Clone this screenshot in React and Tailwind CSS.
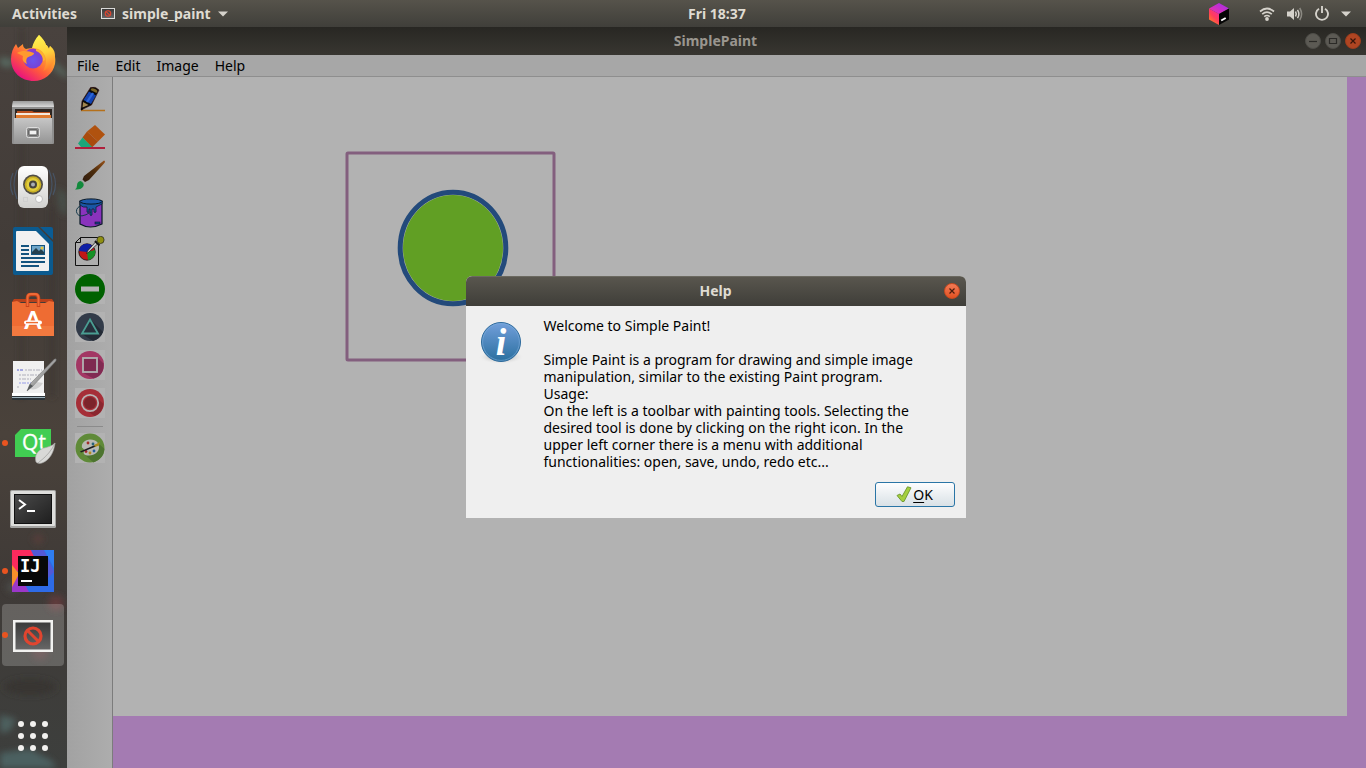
import React from "react";

/* ---------- dock icons (48 x 48) ---------- */

function FirefoxIcon() {
  return (
    <svg viewBox="0 0 48 48" className="size-12" aria-hidden="true">
      <defs>
        <linearGradient id="ff-body" x1="0.85" y1="0.1" x2="0.25" y2="0.95">
          <stop offset="0" stopColor="#ffe14a" />
          <stop offset="0.35" stopColor="#ffa02e" />
          <stop offset="0.65" stopColor="#ff5a3c" />
          <stop offset="1" stopColor="#e9127f" />
        </linearGradient>
        <radialGradient id="ff-globe" cx="0.5" cy="0.6" r="0.6">
          <stop offset="0" stopColor="#6a55ee" />
          <stop offset="0.6" stopColor="#7545d8" />
          <stop offset="1" stopColor="#9a35c9" />
        </radialGradient>
        <linearGradient id="ff-tail" x1="0.4" y1="0" x2="0.6" y2="1">
          <stop offset="0" stopColor="#fff44f" />
          <stop offset="0.5" stopColor="#ffd23c" />
          <stop offset="1" stopColor="#ff7a2b" />
        </linearGradient>
      </defs>
      <path d="M30 0c3 3 6 6 7 10 1-0 2 2 3 4l1-3c5 6 6 13 5 18-2 10-11 17-21 17C12 46 2 37 2 24c0-6 2-11 5-15l2 4 5-4c0 3 1 4 3 5 3-1 6-1 8-1-0-5 2-9 5-13z" fill="url(#ff-body)" />
      <path d="M30 0c-3 3-6 8-7 13 7 0 11 3 13 8 2 5 1 10-2 15 8-3 12-8 12-15 0-4-1-7-5-10l-1 3c-1-2-2-4-3-4-1-4-4-7-7-10z" fill="url(#ff-tail)" />
      <circle cx="24" cy="23.500" r="10" fill="url(#ff-globe)" />
      <path d="M8 18c5-3 12-2 17 0 0 3-5 3-7 5-1 2-1 4 0 6-4-2-5-4-4-8-2-1-4-2-6-3z" fill="#ff9a2e" />
      <path d="M27 14c5 0 9 5 9 11l-2 1c0-4-2-8-7-10z" fill="#ffb02e" />
    </svg>
  );
}

function FilesIcon() {
  return (
    <svg viewBox="0 0 48 48" className="size-12" aria-hidden="true">
      <defs>
        <linearGradient id="files-front" x1="0" y1="0" x2="0" y2="1">
          <stop offset="0" stopColor="#c6c6c6" />
          <stop offset="1" stopColor="#949494" />
        </linearGradient>
        <linearGradient id="files-top" x1="0" y1="0" x2="0" y2="1">
          <stop offset="0" stopColor="#9c9c9c" />
          <stop offset="1" stopColor="#dadada" />
        </linearGradient>
      </defs>
      <path d="M4 2h40l1 5v37a1 1 0 0 1-1 1H4a1 1 0 0 1-1-1V7z" fill="#8f8f8f" />
      <path d="M4 2h40l1 6H3z" fill="url(#files-top)" />
      <rect x="6" y="10" width="37" height="9" fill="#2d2622" />
      <path d="M8 12h15l2 1h16v2H8z" fill="#b8501f" />
      <rect x="7" y="14" width="34" height="2" fill="#f4e9dd" />
      <rect x="7" y="16" width="35" height="3" fill="#e07a2f" />
      <path d="M5 19h38v25a1 1 0 0 1-1 1H6a1 1 0 0 1-1-1z" fill="url(#files-front)" />
      <rect x="17.500" y="28.500" width="13" height="10" rx="2" fill="#8a8a8a" stroke="#dedede" />
      <rect x="20" y="31" width="8" height="5" rx="0.500" fill="#f2f2f2" stroke="#444" />
    </svg>
  );
}

function MusicIcon() {
  return (
    <svg viewBox="0 0 48 48" className="size-12" aria-hidden="true">
      <defs>
        <linearGradient id="music-body" x1="0" y1="0" x2="0" y2="1">
          <stop offset="0" stopColor="#ffffff" />
          <stop offset="1" stopColor="#d0d0ce" />
        </linearGradient>
      </defs>
      <g fill="none" stroke="#4b6f99" strokeWidth="1.200">
        <path d="M8 7q-6 14 0 29M4 10q-5 11 0 22" opacity="0.450" />
        <path d="M40 7q6 14 0 29M44 10q5 11 0 22" opacity="0.450" />
      </g>
      <rect x="9" y="3" width="30" height="42" rx="6" fill="url(#music-body)" />
      <circle cx="24" cy="21.500" r="10" fill="#504d46" />
      <circle cx="24" cy="21.500" r="8.300" fill="#c9b024" />
      <circle cx="24" cy="21.500" r="6.500" fill="#e1cd3f" />
      <circle cx="24" cy="21.500" r="4" fill="#45423d" />
      <circle cx="24" cy="21.500" r="2" fill="#a9adb5" />
      <circle cx="30" cy="36" r="3.500" fill="#fafafa" stroke="#bdbdbd" />
      <rect x="14.500" y="34.500" width="4" height="4" fill="none" stroke="#cfcfcf" />
    </svg>
  );
}

function WriterIcon() {
  return (
    <svg viewBox="0 0 48 48" className="size-12" aria-hidden="true">
      <path d="M6 0h23l15 15v31a2 2 0 0 1-2 2H6a2 2 0 0 1-2-2V2a2 2 0 0 1 2-2z" fill="#0b5a8e" />
      <path d="M31 0h11a2 2 0 0 1 2 2v11z" fill="#0a5c94" />
      <path d="M8 4h19l13 13v26a1 1 0 0 1-1 1H8a1 1 0 0 1-1-1V5a1 1 0 0 1 1-1z" fill="#f1f1f1" />
      <g fill="#14547f">
        <rect x="12" y="18" width="8" height="2" />
        <rect x="12" y="22" width="8" height="2" />
        <rect x="12" y="26" width="8" height="2" />
        <rect x="12" y="30" width="24" height="2" />
        <rect x="12" y="34" width="24" height="2" />
        <rect x="12" y="38" width="18" height="2" />
        <rect x="22" y="18" width="14" height="10" />
      </g>
      <rect x="23" y="19" width="12" height="8" fill="#6fa6c9" />
      <path d="M23 27v-2l4-4 3 3 2-2 3 3v2z" fill="#24404f" />
      <circle cx="33" cy="21" r="1.500" fill="#e8c63a" />
    </svg>
  );
}

function SoftwareIcon() {
  return (
    <svg viewBox="0 0 48 48" className="size-12" aria-hidden="true">
      <path d="M5 8h38l2 3H3z" fill="#b8401a" />
      <path d="M3 11l5-1 4 2h24l4-2 5 1v34H3z" fill="#ee6c33" />
      <path d="M3 35h42v10H3z" fill="#f2793f" />
      <path d="M18.500 16V7q0-3.500 3.500-3.500h4q3.500 0 3.500 3.500v9" fill="none" stroke="#c9451b" strokeWidth="3.500" />
      <path d="M18.500 15V7q0-4 3.500-4h4q3.500 0 3.500 4v8" fill="none" stroke="#ee6a37" strokeWidth="1.800" />
      <text x="24" y="38" textAnchor="middle" fontSize="25" fontWeight="700" fontFamily="Lato, sans-serif" fill="#fff">A</text>
      <rect x="15" y="29.500" width="18" height="4" rx="2" fill="#fff" />
      <rect x="17" y="30.900" width="12" height="1.400" fill="#ee6c33" />
    </svg>
  );
}

function EditorIcon() {
  return (
    <svg viewBox="0 0 48 48" className="size-12" aria-hidden="true">
      <defs>
        <linearGradient id="pen" x1="0" y1="0" x2="1" y2="1">
          <stop offset="0" stopColor="#e8e8e8" />
          <stop offset="1" stopColor="#5b5b5b" />
        </linearGradient>
      </defs>
      <rect x="3" y="39" width="33" height="6" rx="1" fill="#2b3338" />
      <path d="M4 6h31v31l1 3H3l1-3z" fill="#f0f0f0" />
      <rect x="3" y="38" width="33" height="3" fill="#fff" />
      <rect x="3" y="42" width="33" height="1" fill="#9fb3bd" />
      <g stroke="#c4c4cc" strokeWidth="1.600" strokeDasharray="2 1 4 1">
        <path d="M8 15h6" stroke="#8a90dc" />
        <path d="M16 15h17M10 20h20M10 24h12" />
        <path d="M10 28h12" stroke="#b4b8ea" />
        <path d="M8 32h2" />
      </g>
      <path d="M21 34q8 2 13-6l-6-1z" fill="#bdbdbd" opacity="0.600" />
      <path d="M18 36l3-7L45.500 4q2.500-1 1.500 2L24 31z" fill="url(#pen)" stroke="#6a6a6a" strokeWidth="0.500" />
      <path d="M18 36l3-7 3 2z" fill="#54585a" />
    </svg>
  );
}

function QtIcon() {
  return (
    <svg viewBox="0 0 48 48" className="size-12" aria-hidden="true">
      <path d="M12 10h30v22l-6 6H6V16z" fill="#41cd52" />
      <text x="25" y="31" textAnchor="middle" fontSize="21" fontFamily="'Open Sans', sans-serif" fill="#fff" stroke="#fff" strokeWidth="0.300">Qt</text>
      <path d="M46 24c-1 9-5 17-13 20-3 1-5 0-6-1-2-7 2-12 8-14 4-1 8-2 11-5z" fill="#d9d9d7" stroke="#a5a5a3" strokeWidth="0.600" />
      <path d="M46 24q-4 10-17 20" fill="none" stroke="#a3a3a1" strokeWidth="0.800" />
    </svg>
  );
}

function TerminalIcon() {
  return (
    <svg viewBox="0 0 48 48" className="size-12" aria-hidden="true">
      <defs>
        <linearGradient id="term" x1="0" y1="0" x2="1" y2="1">
          <stop offset="0" stopColor="#4a4a4a" />
          <stop offset="1" stopColor="#1f1f1f" />
        </linearGradient>
      </defs>
      <rect x="1" y="7" width="46" height="38" rx="1.500" fill="#a4a4a2" />
      <rect x="2" y="8" width="44" height="35" rx="1" fill="#dededc" />
      <rect x="5" y="11" width="38" height="30" fill="#111" />
      <rect x="6" y="12" width="36" height="28" fill="url(#term)" />
      <path d="M10 17l6 4.500-6 4.500M18 28h8" fill="none" stroke="#fff" strokeWidth="2" />
    </svg>
  );
}

function IdeaIcon() {
  return (
    <svg viewBox="0 0 48 48" className="size-12" aria-hidden="true">
      <rect x="3" y="3" width="42" height="42" fill="#2e6be6" />
      <path d="M3 3h19l4 8-14 16-9-7z" fill="#fb2a5d" />
      <path d="M3 18l9 11-9 13z" fill="#f7902a" />
      <path d="M3 40l7-13 10 18H3z" fill="#9b37c9" />
      <path d="M22 3h13l10 22-8 8z" fill="#5359d6" />
      <path d="M35 3h10v18z" fill="#2f7df0" />
      <rect x="9" y="9" width="30" height="30" fill="#080808" />
      <text x="11" y="25" fontSize="17" fontWeight="700" fontFamily="'DejaVu Sans Mono', monospace" fill="#fff">IJ</text>
      <rect x="12" y="33" width="11" height="2" fill="#fff" />
    </svg>
  );
}

function PaintAppIcon({ className }) {
  return (
    <svg viewBox="4 9 40 32" className={className} aria-hidden="true">
      <defs>
        <linearGradient id="pa-screen" x1="0" y1="0" x2="0" y2="1">
          <stop offset="0" stopColor="#3a3a3a" />
          <stop offset="1" stopColor="#666" />
        </linearGradient>
      </defs>
      <rect x="4" y="9" width="40" height="32" fill="#f2f2f0" />
      <rect x="6.500" y="11.500" width="35" height="27" fill="url(#pa-screen)" />
      <circle cx="24" cy="25" r="8" fill="none" stroke="#e0452f" strokeWidth="3.200" />
      <path d="M18.500 19.500l11 11" stroke="#e0452f" strokeWidth="3" />
    </svg>
  );
}

const dock = [
  { name: "Firefox", icon: <FirefoxIcon /> },
  { name: "Files", icon: <FilesIcon /> },
  { name: "Rhythmbox", icon: <MusicIcon /> },
  { name: "LibreOffice Writer", icon: <WriterIcon /> },
  { name: "Ubuntu Software", icon: <SoftwareIcon /> },
  { name: "Text Editor", icon: <EditorIcon /> },
  { name: "Qt Creator", icon: <QtIcon />, running: true },
  { name: "Terminal", icon: <TerminalIcon /> },
  { name: "IntelliJ IDEA", icon: <IdeaIcon />, running: true },
  { name: "simple_paint", icon: <PaintAppIcon className="h-8 w-10 mt-[2px]" />, running: true, active: true },
];

function Wallpaper() {
  return (
    <svg viewBox="0 0 67 741" preserveAspectRatio="xMidYMid slice" className="absolute inset-0 size-full" aria-hidden="true">
      <defs>
        <linearGradient id="wall" x1="0" y1="0" x2="0" y2="1">
          <stop offset="0" stopColor="#49423e" />
          <stop offset="0.300" stopColor="#423c38" />
          <stop offset="0.550" stopColor="#4a423b" />
          <stop offset="0.750" stopColor="#3f3a37" />
          <stop offset="1" stopColor="#3d3f3d" />
        </linearGradient>
        <filter id="soft" x="-50%" y="-50%" width="200%" height="200%">
          <feGaussianBlur stdDeviation="3" />
        </filter>
      </defs>
      <rect width="67" height="741" fill="url(#wall)" />
      <g filter="url(#soft)">
        <path d="M0 30l14 3-4 8-10-3z" fill="#596b62" />
        <path d="M54 34l13 12v6l-14-10z" fill="#56665d" />
        <path d="M57 160l10 8v22l-8-8z" fill="#475049" />
        <rect x="20" y="0" width="3" height="370" fill="#3b3532" />
        <rect x="50" y="180" width="4" height="190" fill="#3a3431" />
        <circle cx="38" cy="512" r="5" fill="#573c3b" />
        <circle cx="56" cy="576" r="8" fill="#5e3a3b" />
        <circle cx="40" cy="625" r="8" fill="#553d3d" />
        <circle cx="12" cy="560" r="6" fill="#484a47" />
        <ellipse cx="30" cy="660" rx="26" ry="8" fill="#383531" />
        <path d="M0 688l16 4-6 12-10 2z" fill="#4e605e" />
        <path d="M0 726l30-4 22 12 4 7H0z" fill="#4c6061" />
      </g>
    </svg>
  );
}

function Dock() {
  return (
    <nav aria-label="Dock" className="relative flex w-[67px] shrink-0 flex-col overflow-hidden bg-[#443e3a]">
      <Wallpaper />
      {dock.map((app) => (
        <button
          key={app.name}
          type="button"
          aria-label={app.name}
          className={
            "relative mx-[2px] my-px flex h-[62px] w-[62px] items-center justify-center rounded-[4px] " +
            (app.active ? "bg-white/20" : "")
          }
        >
          {app.running && <span className="absolute left-0 top-[28px] size-[6px] rounded-full bg-[#e95420]" />}
          {app.icon}
        </button>
      ))}
      <button type="button" aria-label="Show Applications" className="relative mt-auto mb-2 ml-[9px] grid size-12 grid-cols-[repeat(3,6px)] place-content-center gap-[6px]">
        {Array.from({ length: 9 }, (_, i) => (
          <span key={i} className="size-[6px] rounded-full bg-[#f2f1ef]" />
        ))}
      </button>
    </nav>
  );
}

/* ---------- tool icons (30 x 30) ---------- */

const toolClass = "size-[30px]";

function PencilTool() {
  return (
    <svg viewBox="0 0 30 30" className={toolClass} aria-hidden="true">
      <path d="M6 26.500h24" stroke="#b5701a" strokeWidth="1.500" />
      <path d="M6 26l1-9L15.500 3.500q5-1.500 8.500 2.500l-7.500 15z" fill="#0a0a0a" stroke="#3a1414" strokeWidth="0.600" />
      <path d="M8.500 16l5.500-8.500 7 4-5 8.500z" fill="#1443b0" />
      <path d="M11 17.500l6-9 2 1-6 9z" fill="#2c66d6" />
      <path d="M15.500 6l1.200-1.800q4 0 5.800 2.800l-1 2z" fill="#7c6524" />
      <path d="M7.500 23.500l.6-5.500 5.400 3z" fill="#a1854f" />
      <path d="M6 26.500l.5-3 2 1.500z" fill="#000" />
    </svg>
  );
}

function EraserTool() {
  return (
    <svg viewBox="0 0 30 30" className={toolClass} aria-hidden="true">
      <path d="M20 3l10 9.500-7 7L12 9.500z" fill="#b0520f" />
      <path d="M12 9.500l11 10-6 6L7.500 15.500z" fill="#a94b0e" />
      <path d="M7.500 15.500L17 25H6l-3-3.500z" fill="#1da67a" />
      <path d="M0 26h30" stroke="#b01030" strokeWidth="1.800" />
    </svg>
  );
}

function BrushTool() {
  return (
    <svg viewBox="0 0 30 30" className={toolClass} aria-hidden="true">
      <defs>
        <linearGradient id="brush" x1="1" y1="0" x2="0" y2="1">
          <stop offset="0" stopColor="#97521a" />
          <stop offset="0.500" stopColor="#4c2c0c" />
          <stop offset="1" stopColor="#2f1c10" />
        </linearGradient>
      </defs>
      <path d="M29 .5q2 1 0 3L14 20l-4 2-2.500-2.500L9 16z" fill="url(#brush)" />
      <path d="M7 20.500l2.500 2.500-1.500 1-2.500-2.500z" fill="#9ca49d" />
      <path d="M5.500 21q4 2 3 5-2 4-8.500 3.500 2-1 2-4 0-4 3.500-4.500z" fill="#128a3c" />
    </svg>
  );
}

function BucketTool() {
  return (
    <svg viewBox="0 0 30 30" className={toolClass} aria-hidden="true">
      <path d="M5 3v23q10 6 22 0V3z" fill="#8a33bd" stroke="#081826" strokeWidth="1.200" />
      <path d="M5 3v4q3 3 7 2v5q1 1 2 0v-3h1v6q1 1 2 0v-6h2v3q1 1 2 0v-5l6-3V3z" fill="#1956a5" stroke="#081826" strokeWidth="0.700" />
      <ellipse cx="16" cy="3.500" rx="11" ry="2.600" fill="#1d5aad" stroke="#081826" />
      <path d="M5 8q-5 3-3 7.500Q5 21 16 14" fill="none" stroke="#16384a" strokeWidth="1" />
      <rect x="20" y="24" width="5" height="2" fill="#1b3d8b" stroke="#081826" strokeWidth="0.600" />
    </svg>
  );
}

function PickerTool() {
  return (
    <svg viewBox="0 0 30 30" className={toolClass} aria-hidden="true">
      <path d="M5.500 1.500H23.500v28H.5v-23z" fill="#aeaeae" stroke="#111" />
      <path d="M5.500 1.500v5h-5" fill="none" stroke="#111" />
      <circle cx="12" cy="16" r="8.200" fill="#c01717" stroke="#111" strokeWidth="0.800" />
      <path d="M12 16l-8-1a8 8 0 0 1 13.500-5z" fill="#0e1fa5" />
      <path d="M12 16l8-2a8 8 0 0 1-7 10z" fill="#149025" />
      <path d="M11.500 17.500l1-2.500 8-9 2 2-8.500 8z" fill="#c9c9c9" stroke="#111" strokeWidth="0.700" />
      <path d="M20 5l4.500 4.500" stroke="#111" strokeWidth="2" />
      <circle cx="25.500" cy="3.900" r="3.600" fill="#8f8f12" stroke="#222" strokeWidth="0.700" />
    </svg>
  );
}

function MinusTool() {
  return (
    <svg viewBox="0 0 30 30" className={toolClass} aria-hidden="true">
      <rect width="30" height="30" fill="#b2b2b2" />
      <circle cx="15" cy="15" r="15" fill="#006100" />
      <rect x="6" y="12.500" width="18" height="5" fill="#b2b2b2" />
    </svg>
  );
}

function TriangleTool() {
  return (
    <svg viewBox="0 0 30 30" className={toolClass} aria-hidden="true">
      <rect width="30" height="30" fill="#b2b2b2" />
      <circle cx="15" cy="15" r="14" fill="#323b49" />
      <path d="M15 7l13 13q-3 7-10 9l-11-7z" fill="#232a35" />
      <path d="M15 7.500l8 14H7z" fill="#27303c" stroke="#4a9d92" strokeWidth="1.800" />
    </svg>
  );
}

function SquareTool() {
  return (
    <svg viewBox="0 0 30 30" className={toolClass} aria-hidden="true">
      <rect width="30" height="30" fill="#b2b2b2" />
      <circle cx="15" cy="15" r="14" fill="#a33764" />
      <path d="M22.500 7.500l6 6q1 12-10 15l-11-6z" fill="#812a52" />
      <rect x="8" y="8" width="14" height="14" fill="#7e2a50" stroke="#b2b2b2" strokeWidth="1.800" />
    </svg>
  );
}

function CircleTool() {
  return (
    <svg viewBox="0 0 30 30" className={toolClass} aria-hidden="true">
      <rect width="30" height="30" fill="#b2b2b2" />
      <circle cx="15" cy="15" r="14" fill="#a62f38" />
      <path d="M21 9l7.500 7q-1 9-9 12l-10-7z" fill="#8a272f" />
      <circle cx="15" cy="15" r="8.200" fill="#a62f38" stroke="#b8b4b4" strokeWidth="1.800" />
      <circle cx="15" cy="15" r="6" fill="#7c242b" />
    </svg>
  );
}

function PaletteTool() {
  return (
    <svg viewBox="0 0 30 30" className={toolClass} aria-hidden="true">
      <rect width="30" height="30" fill="#b2b2b2" />
      <circle cx="15" cy="15" r="14.500" fill="#5f8a38" />
      <path d="M23 10l6.500 6q-1 10-11 13.500l-9-8z" fill="#4d7430" />
      <path d="M15 6.500c7 0 9 4 9 8s-4 8-10 8c-5 0-6-2-5-4s-1-3-2-4c-1-4 3-8 8-8z" fill="#b9b9b4" />
      <circle cx="13" cy="10" r="1.400" fill="#a32d28" />
      <circle cx="18" cy="11" r="1.400" fill="#27647a" />
      <circle cx="11" cy="18.500" r="1.400" fill="#a3272e" />
      <circle cx="15" cy="20" r="1.400" fill="#b38a1f" />
      <circle cx="19" cy="18" r="1.400" fill="#255ea0" />
      <path d="M5 18.500l15-6.500 1 1.500-15 6z" fill="#1d1e22" />
      <path d="M19 12l6-3-1 3.500-4 1.500z" fill="#a98a1c" />
    </svg>
  );
}

const tools = [
  ["Pencil", <PencilTool />],
  ["Eraser", <EraserTool />],
  ["Brush", <BrushTool />],
  ["Fill", <BucketTool />],
  ["Color picker", <PickerTool />],
  ["Line", <MinusTool />],
  ["Triangle", <TriangleTool />],
  ["Rectangle", <SquareTool />],
  ["Ellipse", <CircleTool />],
];

/* ---------- top bar ---------- */

function Caret() {
  return (
    <svg viewBox="0 0 10 6" className="h-[6px] w-[10px]" aria-hidden="true">
      <path d="M0 .5h10L5 5.500z" fill="#d5d2cb" />
    </svg>
  );
}

function CubeIcon() {
  return (
    <svg viewBox="0 0 20 22" className="h-[22px] w-5" aria-hidden="true">
      <defs>
        <linearGradient id="cube-l" x1="0.200" y1="1" x2="0.800" y2="0">
          <stop offset="0" stopColor="#ff8a1f" />
          <stop offset="0.500" stopColor="#ff3d5a" />
          <stop offset="1" stopColor="#f52ba0" />
        </linearGradient>
        <linearGradient id="cube-t" x1="0" y1="1" x2="1" y2="0">
          <stop offset="0" stopColor="#f534a0" />
          <stop offset="1" stopColor="#9d2cf0" />
        </linearGradient>
      </defs>
      <path d="M0 5.500l10 5.500v11L0 16.500z" fill="url(#cube-l)" />
      <path d="M10 0l10 5.500L10 11 0 5.500z" fill="url(#cube-t)" />
      <path d="M10 11l10-5.500v11L10 22z" fill="#050505" />
      <path d="M12.200 17.500l4.500-2.500" stroke="#fff" strokeWidth="2" />
    </svg>
  );
}

function WifiIcon() {
  return (
    <svg viewBox="0 0 16 14" className="h-[14px] w-4" fill="none" stroke="#d5d2cb" strokeWidth="1.700" aria-hidden="true">
      <path d="M1 4.500q7-6 14 0" />
      <path d="M3.200 7.200q4.800-4 9.600 0" />
      <path d="M5.200 9.600q2.800-2.200 5.600 0" />
      <circle cx="8" cy="12" r="1.900" fill="#d5d2cb" stroke="none" />
    </svg>
  );
}

function SpeakerIcon() {
  return (
    <svg viewBox="0 0 16 14" className="h-[14px] w-4" fill="none" strokeWidth="1.500" aria-hidden="true">
      <path d="M0 4.500h3L7 1v12L3 9.500H0z" fill="#d5d2cb" />
      <path d="M8.500 4.500q1.500 2.500 0 5M10.500 2.800q2.800 4.200 0 8.400" stroke="#d5d2cb" />
      <path d="M12.700 1q3.800 6 0 12" stroke="#8b8982" />
    </svg>
  );
}

function PowerIcon() {
  return (
    <svg viewBox="0 0 14 15" className="h-[15px] w-[14px]" fill="none" stroke="#d5d2cb" strokeWidth="1.900" aria-hidden="true">
      <path d="M4 2.700a6 6 0 1 0 6 0M7 0v7" />
    </svg>
  );
}

function TopBar() {
  return (
    <header className="grid h-[27px] shrink-0 grid-cols-[calc(50%+5px)_auto_1fr] items-center bg-linear-to-b from-[#56534b] to-[#403f3a] text-[14px] leading-[20px] font-bold text-[#dfdbd2]">
      <div className="flex items-center pl-3">
        <button type="button">Activities</button>
        <button type="button" className="ml-6 flex items-center gap-[7px]">
          <PaintAppIcon className="h-[11px] w-[14px]" />
          <span>simple_paint</span>
          <Caret />
        </button>
      </div>
      <button type="button">Fri 18:37</button>
      <div className="flex items-center justify-end pr-[15px]">
        <button type="button" aria-label="Toolbox" className="mr-[30px]">
          <CubeIcon />
        </button>
        <button type="button" aria-label="System menu" className="flex items-center gap-3">
          <WifiIcon />
          <SpeakerIcon />
          <PowerIcon />
          <Caret />
        </button>
      </div>
    </header>
  );
}

/* ---------- paint window ---------- */

function WindowButton({ label, tone, children }) {
  return (
    <button type="button" aria-label={label} className={"flex size-4 items-center justify-center rounded-full border " + tone}>
      <svg viewBox="0 0 14 14" className="size-[14px] shrink-0" fill="none" strokeWidth="1.200" aria-hidden="true">
        {children}
      </svg>
    </button>
  );
}

function TitleBar() {
  return (
    <div className="grid h-7 shrink-0 grid-cols-[1fr_auto_1fr] items-center bg-linear-to-b from-[#282723] to-[#383631] pr-[2px]">
      <h1 className="col-start-2 text-[14px] leading-[20px] font-bold text-[#9a968f]">SimplePaint</h1>
      <div className="flex justify-end gap-1 pr-[3px]">
        <WindowButton label="Minimize" tone="border-[#4e4d48] bg-[#5c5a54]">
          <path d="M3 7.500h8" stroke="#2b2a27" />
        </WindowButton>
        <WindowButton label="Maximize" tone="border-[#4e4d48] bg-[#5c5a54]">
          <path d="M3.500 4.500h7v5h-7z" stroke="#2b2a27" />
        </WindowButton>
        <WindowButton label="Close" tone="border-[#9c3d1d] bg-[#b04522]">
          <path d="M4.500 4.500l5 5m0-5l-5 5" stroke="#38150a" />
        </WindowButton>
      </div>
    </div>
  );
}

function Canvas() {
  return (
    <main className="flex min-w-0 flex-1 bg-[#a47bb2] pr-[19px] pb-[52px]">
      <div className="relative flex-1 overflow-hidden bg-[#b2b2b2]">
        <svg viewBox="0 0 212 212" className="absolute top-[74px] left-[232px] size-[212px]" role="img" aria-label="Circle inside a square">
          <rect x="2" y="2" width="207" height="207" rx="1" fill="none" stroke="#835f7e" strokeWidth="3" />
          <ellipse cx="108" cy="97" rx="52.800" ry="55.800" fill="#b2b2b2" stroke="#234a7b" strokeWidth="5" />
          <ellipse cx="108" cy="97" rx="50" ry="53" fill="#619f24" />
        </svg>
      </div>
    </main>
  );
}

function HelpDialog() {
  return (
    <div className="absolute inset-0 flex items-center justify-center pr-[2px] pb-[2px]">
      <section role="dialog" aria-labelledby="help-title" className="w-[500px] overflow-hidden rounded-t-[6px] bg-[#efefef]">
        <div className="grid h-[30px] grid-cols-[1fr_auto_1fr] items-center border-t border-[#6b6960] bg-linear-to-b from-[#59564e] to-[#3f3e39]">
          <h2 id="help-title" className="col-start-2 text-[14px] leading-[20px] font-bold text-[#dfdbd2]">Help</h2>
          <div className="flex justify-end pr-[6px]">
            <WindowButton label="Close help" tone="border-[#c94a20] bg-linear-to-b from-[#f37a55] to-[#e2511f]">
              <path d="M4.500 4.500l5 5m0-5l-5 5" stroke="#4a1c0e" />
            </WindowButton>
          </div>
        </div>
        <div className="p-[11px]">
          <div className="flex gap-[19px]">
            <svg viewBox="0 0 48 48" className="mt-px size-12 shrink-0" aria-hidden="true">
              <defs>
                <linearGradient id="info" x1="0" y1="0" x2="0" y2="1">
                  <stop offset="0" stopColor="#729fdb" />
                  <stop offset="1" stopColor="#2a6f9f" />
                </linearGradient>
                <radialGradient id="info-shadow">
                  <stop offset="0" stopColor="#777" />
                  <stop offset="1" stopColor="#efefef" stopOpacity="0" />
                </radialGradient>
              </defs>
              <ellipse cx="24" cy="39" rx="23" ry="7" fill="url(#info-shadow)" />
              <circle cx="24" cy="24" r="19.500" fill="url(#info)" stroke="#2d6a9c" />
              <circle cx="24" cy="24" r="18.400" fill="none" stroke="#7fb0dc" strokeWidth="0.800" opacity="0.700" />
              <text x="24" y="37" textAnchor="middle" fontSize="38" fontStyle="italic" fontWeight="700" fontFamily="'Liberation Serif', serif" fill="#fff">i</text>
            </svg>
            <p className="text-[14px] leading-[17px] whitespace-nowrap text-black">
              Welcome to Simple Paint!<br />
              <br />
              Simple Paint is a program for drawing and simple image<br />
              manipulation, similar to the existing Paint program.<br />
              Usage:<br />
              On the left is a toolbar with painting tools. Selecting the<br />
              desired tool is done by clicking on the right icon. In the<br />
              upper left corner there is a menu with additional<br />
              functionalities: open, save, undo, redo etc...
            </p>
          </div>
          <div className="mt-3 flex justify-end">
            <button type="button" className="flex h-[25px] w-20 items-center justify-center gap-px rounded-[3px] border border-[#2a75a6] bg-linear-to-b from-[#fdfdfe] to-[#d9e1e6] text-[14px] leading-[17px] text-black">
              <svg viewBox="0 0 16 16" className="size-4" aria-hidden="true">
                <path d="M1 9.500l3-1.500 2 2.500L11.500.8l3.500 1L8 15.500H6z" fill="#a5cf3f" stroke="#6d9630" strokeWidth="0.900" strokeLinejoin="round" />
              </svg>
              <span><span className="underline underline-offset-2">O</span>K</span>
            </button>
          </div>
        </div>
      </section>
    </div>
  );
}

export default function App() {
  return (
    <div className="flex min-h-screen flex-col font-['Noto_Sans',sans-serif]">
      <TopBar />
      <div className="flex flex-1">
        <Dock />
        <div className="relative flex min-w-0 flex-1 flex-col">
          <TitleBar />
          <nav aria-label="Menu" className="flex h-[22px] shrink-0 items-center gap-4 border-b border-[#8e8e8e] bg-[#a7a7a7] pl-[10px] text-[14px] leading-[17px] text-black">
            <button type="button">File</button>
            <button type="button">Edit</button>
            <button type="button">Image</button>
            <button type="button">Help</button>
          </nav>
          <div className="flex flex-1">
            <div role="toolbar" aria-label="Painting tools" className="flex w-[46px] shrink-0 flex-col border-r border-[#7c7c7c] bg-linear-to-r from-[#a2a2a2] to-[#adadad] pt-[7px] pl-2">
              <div className="flex flex-col gap-2">
                {tools.map(([name, icon]) => (
                  <button key={name} type="button" aria-label={name} className="size-[30px]">
                    {icon}
                  </button>
                ))}
              </div>
              <div className="mt-2 mb-[6px] ml-[2px] h-px w-[26px] bg-[#8b8b8b]" />
              <button type="button" aria-label="Color palette" className="size-[30px]">
                <PaletteTool />
              </button>
            </div>
            <Canvas />
          </div>
          <HelpDialog />
        </div>
      </div>
    </div>
  );
}
